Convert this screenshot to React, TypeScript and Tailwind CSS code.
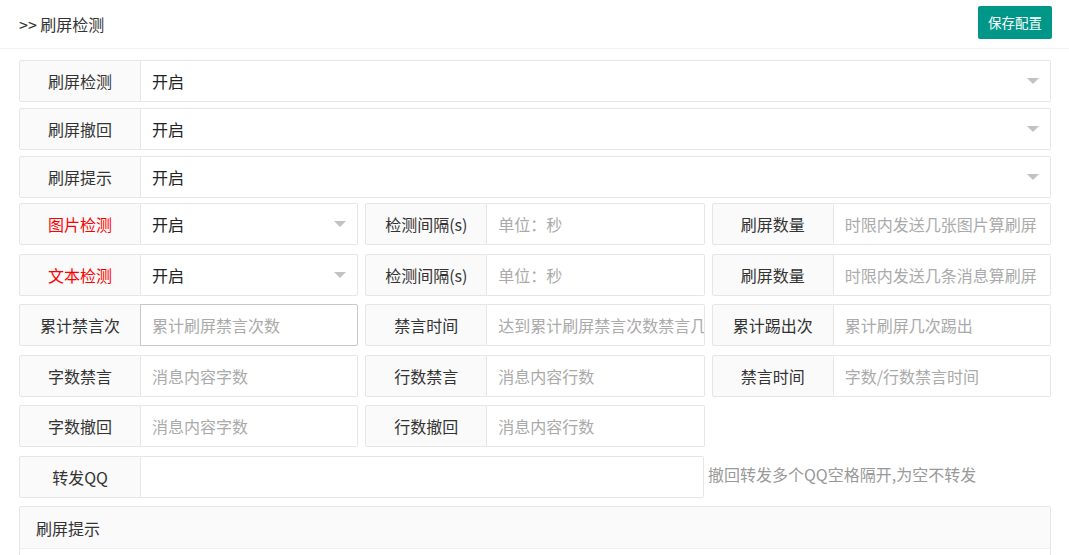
import React from "react";

const font = { fontFamily: '"Noto Sans CJK SC", "Noto Sans", sans-serif' };

type Item = { label: string; red?: boolean; value?: string; placeholder?: string; select?: boolean; hover?: boolean };

const Arrow = () => (
  <span className="absolute right-[11px] top-1/2 -translate-y-1/2 w-0 h-0 border-t-[6px] border-t-[#c2c2c2] border-x-[6px] border-x-transparent" />
);

const Field = ({ label, red, value, placeholder, select, hover }: Item) => (
  <div className="flex h-[42px] min-w-0">
    <div
      className={`w-[122px] shrink-0 flex items-center justify-center border border-[#e6e6e6] bg-[#fafafa] rounded-l-[2px] ${
        red ? "text-[#ff0000]" : "text-[#333]"
      }`}
    >
      {label}
    </div>
    <div
      className={`relative flex-1 min-w-0 flex items-center pl-[11px] border rounded-r-[2px] overflow-hidden whitespace-nowrap ${
        hover ? "border-[#c9c9c9] -ml-px" : "border-[#e6e6e6] border-l-0"
      }`}
    >
      {value ? <span className="text-[#222]">{value}</span> : <span className="text-[#aaa]">{placeholder}</span>}
      {select && <Arrow />}
    </div>
  </div>
);

const App = () => {
  return (
    <div className="w-[1069px] h-[555px] overflow-hidden bg-white text-[16px]" style={font}>
      <div className="h-[49px] flex items-center justify-between pl-[19px] pr-[17px] border-b border-[#f2f2f2]">
        <span className="text-[#333] text-[16px]">&gt;&gt; 刷屏检测</span>
        <button className="h-[33px] w-[74px] mb-[3px] rounded-[2px] bg-[#009688] text-white text-[13.5px]">保存配置</button>
      </div>

      <div className="pl-[19px] pr-[18px] pt-[11px]">
        <div className="flex flex-col gap-[6px]">
          <Field label="刷屏检测" value="开启" select />
          <Field label="刷屏撤回" value="开启" select />
          <Field label="刷屏提示" value="开启" select />
        </div>

        <div className="flex flex-col gap-[8.5px] mt-[5px]">
          <div className="grid grid-cols-3 gap-x-[7px]">
            <Field label="图片检测" red value="开启" select />
            <Field label="检测间隔(s)" placeholder="单位：秒" />
            <Field label="刷屏数量" placeholder="时限内发送几张图片算刷屏" />
          </div>
          <div className="grid grid-cols-3 gap-x-[7px]">
            <Field label="文本检测" red value="开启" select />
            <Field label="检测间隔(s)" placeholder="单位：秒" />
            <Field label="刷屏数量" placeholder="时限内发送几条消息算刷屏" />
          </div>
          <div className="grid grid-cols-3 gap-x-[7px]">
            <Field label="累计禁言次" placeholder="累计刷屏禁言次数" hover />
            <Field label="禁言时间" placeholder="达到累计刷屏禁言次数禁言几分钟" />
            <Field label="累计踢出次" placeholder="累计刷屏几次踢出" />
          </div>
          <div className="grid grid-cols-3 gap-x-[7px]">
            <Field label="字数禁言" placeholder="消息内容字数" />
            <Field label="行数禁言" placeholder="消息内容行数" />
            <Field label="禁言时间" placeholder="字数/行数禁言时间" />
          </div>
          <div className="grid grid-cols-3 gap-x-[7px]">
            <Field label="字数撤回" placeholder="消息内容字数" />
            <Field label="行数撤回" placeholder="消息内容行数" />
          </div>
          <div className="flex items-center">
            <div className="w-[685px] shrink-0">
              <Field label="转发QQ" />
            </div>
            <span className="ml-[4px] mb-[5px] text-[#999]">撤回转发多个QQ空格隔开,为空不转发</span>
          </div>
          <div className="border border-[#e6e6e6] rounded-[2px] h-[100px]">
            <div className="h-[42px] flex items-center pl-[16px] bg-[#fafafa] border-b border-[#eeeeee] text-[#333]">刷屏提示</div>
          </div>
        </div>
      </div>
    </div>
  );
};

export default App;
